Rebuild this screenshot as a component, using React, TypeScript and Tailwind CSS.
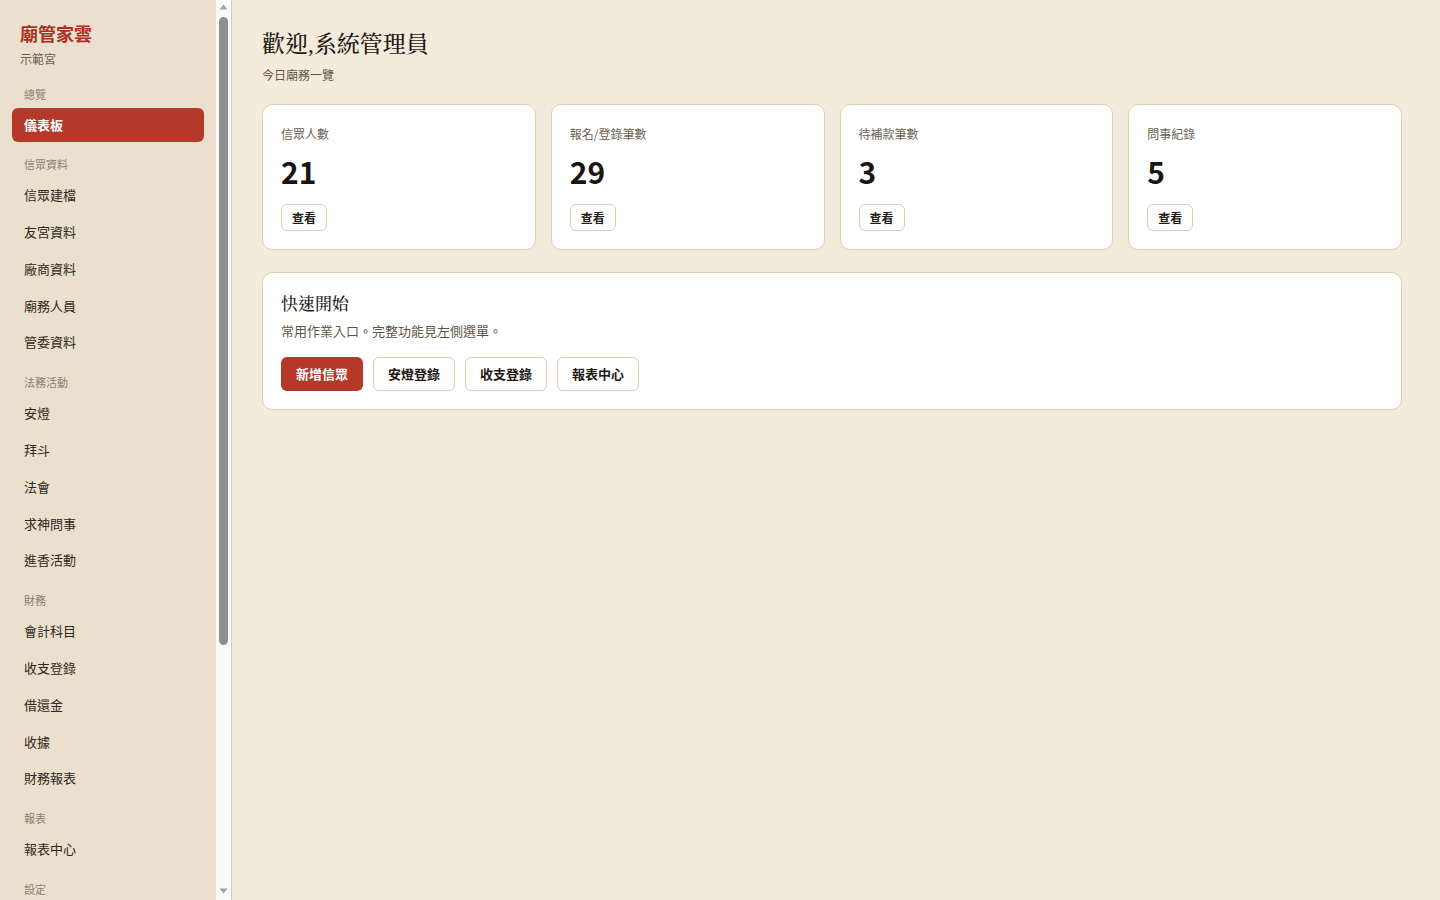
import { useState } from "react";

type NavGroup = { title: string; items: string[] };

const NAV: NavGroup[] = [
  { title: "總覽", items: ["儀表板"] },
  { title: "信眾資料", items: ["信眾建檔", "友宮資料", "廠商資料", "廟務人員", "管委資料"] },
  { title: "法務活動", items: ["安燈", "拜斗", "法會", "求神問事", "進香活動"] },
  { title: "財務", items: ["會計科目", "收支登錄", "借還金", "收據", "財務報表"] },
  { title: "報表", items: ["報表中心"] },
  { title: "設定", items: ["宮廟設定", "使用者管理", "系統參數"] },
];

const STATS = [
  { label: "信眾人數", value: 21 },
  { label: "報名/登錄筆數", value: 29 },
  { label: "待補款筆數", value: 3 },
  { label: "問事紀錄", value: 5 },
];

const QUICK = ["新增信眾", "安燈登錄", "收支登錄", "報表中心"];

const sans = "font-['Noto_Sans_CJK_TC','Noto_Sans',sans-serif]";
const serif =
  "font-['Liberation_Serif','Noto_Serif_CJK_TC','Noto_Serif_TC',serif]";

// classic scrollbar look for the side menu
function ScrollRail() {
  return (
    <div className="flex w-[15px] shrink-0 flex-col items-center bg-[#fafafa]">
      <svg width="9" height="6" viewBox="0 0 9 6" className="mt-[4px]">
        <path d="M4.5 0.5 L8.5 5.5 L0.5 5.5 Z" fill="#a3a3a3" />
      </svg>
      <div className="mt-[7px] h-[628px] w-[9px] rounded-full bg-[#8f8f8f]" />
      <div className="flex-1" />
      <svg width="9" height="6" viewBox="0 0 9 6" className="mb-[6px]">
        <path d="M0.5 0.5 L8.5 0.5 L4.5 5.5 Z" fill="#a3a3a3" />
      </svg>
    </div>
  );
}

function Sidebar({ active, onPick }: { active: string; onPick: (s: string) => void }) {
  return (
    <aside className="flex h-screen w-[232px] shrink-0 border-r border-[#d8cdb9] bg-[#eae0cd]">
      <div className="h-screen w-[216px] shrink-0 overflow-hidden px-3 pb-6">
        <div className="px-2 pt-[20px]">
          <div className="text-[18px] font-bold leading-[26px] text-[#a8321f]">廟管家雲</div>
          <div className="mt-[5px] text-xs text-[#6b6152]">示範宮</div>
        </div>
        {NAV.map((group, gi) => (
          <div
            key={group.title}
            className={gi === 0 ? "mt-[19px]" : gi === 1 ? "mt-[14px]" : "mt-[15px]"}
          >
            <div className="px-3 text-[11px] leading-4 text-[#8a7f6f]">{group.title}</div>
            <ul className="mt-[6px] flex flex-col gap-[2.75px]">
              {group.items.map((item) => (
                <li key={item}>
                  <button
                    onClick={() => onPick(item)}
                    className={
                      item === active
                        ? "flex h-[34px] w-full items-center rounded-md bg-[#b5392a] px-3 text-[13px] font-bold text-white"
                        : "flex h-[34px] w-full items-center rounded-md px-3 text-[13px] text-[#2e2820] hover:bg-[#e0d3bc]"
                    }
                  >
                    {item}
                  </button>
                </li>
              ))}
            </ul>
          </div>
        ))}
      </div>
      <ScrollRail />
    </aside>
  );
}

export default function App() {
  const [active, setActive] = useState("儀表板");

  return (
    <div className={`flex h-screen w-full overflow-hidden bg-[#f5ebdc] ${sans}`}>
      <Sidebar active={active} onPick={setActive} />

      <main className="h-screen flex-1 overflow-y-auto pl-[30px] pr-[38px] pt-[29px]">
        <h1 className={`${serif} text-[23px] font-medium leading-8 text-[#1f1a14]`}>歡迎,系統管理員</h1>
        <p className="mt-[6px] text-xs text-[#5f5648]">今日廟務一覽</p>

        <div className="mt-[21px] grid grid-cols-4 gap-[15px]">
          {STATS.map((s) => (
            <div
              key={s.label}
              className="h-[146px] rounded-[10px] border border-[#dfd0b5] bg-white px-[18px] pt-[21px]"
            >
              <div className="text-xs leading-4 text-[#6b6152]">{s.label}</div>
              <div className="mt-[11px] text-[30px] font-bold leading-9 text-[#1a1510]">{s.value}</div>
              <button className="mt-[15px] h-[27px] rounded-md border border-[#dccdb1] bg-white px-[10px] text-xs font-bold text-[#1f1a14]">
                查看
              </button>
            </div>
          ))}
        </div>

        <section className="mt-[22px] rounded-[10px] border border-[#dfd0b5] bg-white px-[18px] pb-[18px] pt-[20px]">
          <h2 className={`${serif} text-[17px] font-medium leading-6 text-[#1f1a14]`}>快速開始</h2>
          <p className="mt-[4px] text-[13px] leading-5 text-[#5f5648]">常用作業入口。完整功能見左側選單。</p>
          <div className="mt-[16px] flex gap-[10px]">
            {QUICK.map((q, i) => (
              <button
                key={q}
                className={
                  i === 0
                    ? "h-[34px] w-[82px] rounded-md bg-[#b5392a] text-[13px] font-bold text-white"
                    : "h-[34px] w-[82px] rounded-md border border-[#dccdb1] bg-white text-[13px] font-bold text-[#1f1a14]"
                }
              >
                {q}
              </button>
            ))}
          </div>
        </section>
      </main>
    </div>
  );
}
